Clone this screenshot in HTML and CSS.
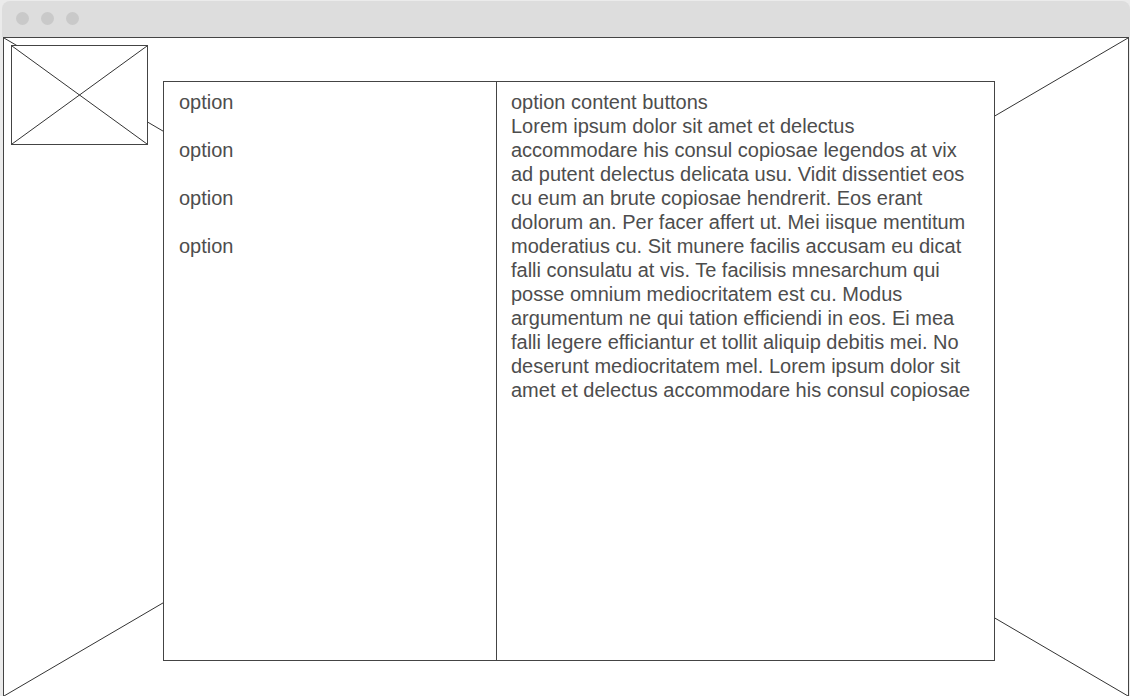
FILE: index.html
```html
<!DOCTYPE html>
<html lang="en">
<head>
<meta charset="utf-8">
<title>Options</title>
<link rel="stylesheet" href="styles.css">
</head>
<body>
<div class="window">
  <header class="titlebar">
    <span class="dot"></span><span class="dot"></span><span class="dot"></span>
  </header>
  <main class="stage">
    <svg class="backdrop" viewBox="0 0 100 100" preserveAspectRatio="none" aria-hidden="true">
      <path class="stroke" d="M0 0L100 100M100 0L0 100"/>
    </svg>
    <div class="logo">
      <svg class="cross" viewBox="0 0 100 100" preserveAspectRatio="none" aria-hidden="true">
        <path class="stroke" d="M0 0L100 100M100 0L0 100"/>
      </svg>
    </div>
    <section class="panel">
      <ul class="options">
        <li>option</li>
        <li>option</li>
        <li>option</li>
        <li>option</li>
      </ul>
      <article class="content">
        <p>option content buttons</p>
        <p>Lorem ipsum dolor sit amet et delectus<br>
        accommodare his consul copiosae legendos at vix<br>
        ad putent delectus delicata usu. Vidit dissentiet eos<br>
        cu eum an brute copiosae hendrerit. Eos erant<br>
        dolorum an. Per facer affert ut. Mei iisque mentitum<br>
        moderatius cu. Sit munere facilis accusam eu dicat<br>
        falli consulatu at vis. Te facilisis mnesarchum qui<br>
        posse omnium mediocritatem est cu. Modus<br>
        argumentum ne qui tation efficiendi in eos. Ei mea<br>
        falli legere efficiantur et tollit aliquip debitis mei. No<br>
        deserunt mediocritatem mel. Lorem ipsum dolor sit<br>
        amet et delectus accommodare his consul copiosae</p>
      </article>
    </section>
  </main>
</div>
</body>
</html>
```
FILE: styles.css
```css
* {
  box-sizing: border-box;
}

body {
  margin: 0;
  background: #ebebeb;
  color: #4d4d4d;
  font: 20px/24px "Liberation Sans", Arial, sans-serif;
}

p,
ul {
  margin: 0;
  padding: 0;
}

.window {
  display: flex;
  flex-direction: column;
  min-height: 100vh;
  padding: 1px 0 0 2px;
}

.titlebar {
  display: flex;
  align-items: center;
  gap: 12px;
  height: 36px;
  padding: 0 14px 2px;
  border-radius: 8px 8px 0 0;
  background: #ddd;
}

.dot {
  width: 13px;
  height: 13px;
  border-radius: 50%;
  background: #c9c9c9;
}

.stage {
  position: relative;
  display: flex;
  flex: 1;
  align-items: flex-start;
  gap: 15px;
  margin: 0 1px;
  padding: 0 133px 35px 7px;
  border: 1px solid #444;
  border-bottom: 0;
  background: #fff;
}

.backdrop {
  position: absolute;
  inset: 0;
  width: 100%;
  height: 100%;
}

.stroke {
  fill: none;
  stroke: #333;
  stroke-width: 1px;
  vector-effect: non-scaling-stroke;
}

.logo {
  position: relative;
  flex: none;
  width: 137px;
  height: 100px;
  margin-top: 7px;
  border: 1px solid #444;
  background: #fff;
}

.cross {
  display: block;
  width: 100%;
  height: 100%;
}

.panel {
  position: relative;
  display: grid;
  flex: 1;
  grid-template-columns: 2fr 3fr;
  align-self: stretch;
  margin-top: 43px;
  border: 1px solid #444;
  background: #fff;
}

.options {
  display: flex;
  flex-direction: column;
  gap: 24px;
  padding: 8px 15px;
  list-style: none;
}

.content {
  padding: 8px 14px;
  border-left: 1px solid #444;
  white-space: nowrap;
}
```
